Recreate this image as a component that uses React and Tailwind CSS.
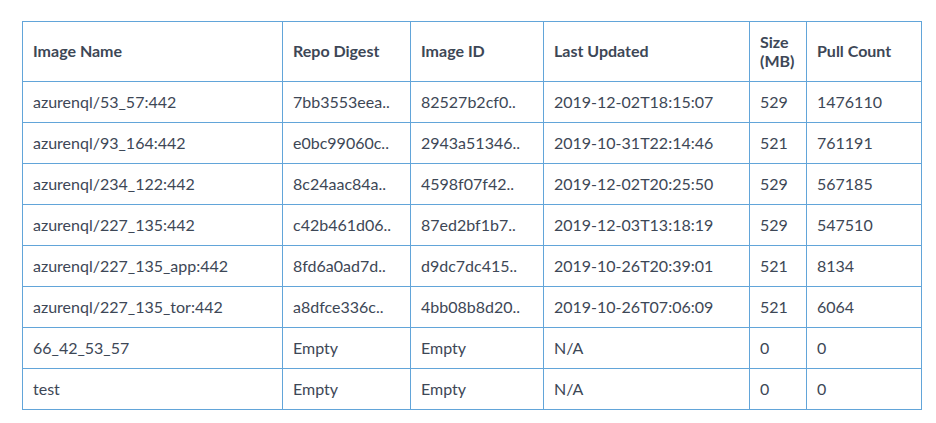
const rows = [
  ["azurenql/53_57:442", "7bb3553eea..", "82527b2cf0..", "2019-12-02T18:15:07", "529", "1476110"],
  ["azurenql/93_164:442", "e0bc99060c..", "2943a51346..", "2019-10-31T22:14:46", "521", "761191"],
  ["azurenql/234_122:442", "8c24aac84a..", "4598f07f42..", "2019-12-02T20:25:50", "529", "567185"],
  ["azurenql/227_135:442", "c42b461d06..", "87ed2bf1b7..", "2019-12-03T13:18:19", "529", "547510"],
  ["azurenql/227_135_app:442", "8fd6a0ad7d..", "d9dc7dc415..", "2019-10-26T20:39:01", "521", "8134"],
  ["azurenql/227_135_tor:442", "a8dfce336c..", "4bb08b8d20..", "2019-10-26T07:06:09", "521", "6064"],
  ["66_42_53_57", "Empty", "Empty", "N/A", "0", "0"],
  ["test", "Empty", "Empty", "N/A", "0", "0"],
];

const headers = ["Image Name", "Repo Digest", "Image ID", "Last Updated", "Size (MB)", "Pull Count"];
const widths = ["w-[260px]", "w-[128px]", "w-[133px]", "w-[206px]", "w-[57px]", "w-[115px]"];

export default function App() {
  return (
    <div className="bg-white w-[936px] h-[423px] pt-[21px] pl-[22px] font-['Lato',sans-serif] text-[16px] text-[#3d4756]">
      <table className="table-fixed border-collapse w-[900px]">
        <thead>
          <tr className="h-[60px]">
            {headers.map((h, i) => (
              <th
                key={h}
                className={`${widths[i]} border border-[#62a5d9] px-[10px] pb-[2px] text-left align-middle font-bold leading-[19px]`}
              >
                {h === "Size (MB)" ? (
                  <span>Size<br />(MB)</span>
                ) : h}
              </th>
            ))}
          </tr>
        </thead>
        <tbody>
          {rows.map((r) => (
            <tr key={r[0]} className="h-[41px]">
              {r.map((c, j) => (
                <td key={j} className="border border-[#62a5d9] px-[10px] align-middle whitespace-nowrap">
                  {c}
                </td>
              ))}
            </tr>
          ))}
        </tbody>
      </table>
    </div>
  );
}
